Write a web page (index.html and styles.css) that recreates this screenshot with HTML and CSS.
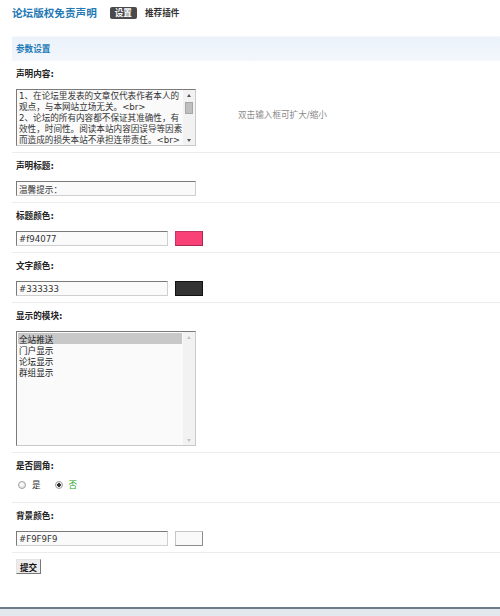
FILE: index.html
```html
<!DOCTYPE html>
<html lang="zh-CN">
<head>
    <meta charset="UTF-8">
    <title>论坛版权免责声明 - 设置</title>
    <link rel="stylesheet" href="styles.css">
</head>
<body>
    <div class="top">
        <h1 class="plugin-name">论坛版权免责声明</h1>
        <span class="tab tab-on">设置</span>
        <span class="tab">推荐插件</span>
    </div>

    <form class="panel">
        <div class="panel-head">参数设置</div>

        <!-- 声明内容 -->
        <div class="row">
            <div class="row-label">声明内容:</div>
            <div class="field">
                <div class="box box-area">
                    <textarea class="area">1、在论坛里发表的文章仅代表作者本人的观点，与本网站立场无关。&lt;br&gt;
2、论坛的所有内容都不保证其准确性，有效性，时间性。阅读本站内容因误导等因素而造成的损失本站不承担连带责任。&lt;br&gt;
3、论坛的所有内容均由网友发表，如有侵犯您的版权请联系管理员，我们将在第一时间内删除。&lt;br&gt;
4、论坛的所有言论不代表本站观点，请读者自行判断其真实性。&lt;br&gt;
5、转载请注明出处，违者必究。&lt;br&gt;
6、本声明未涉及的问题参见国家有关法律法规，当本声明与国家法律法规冲突时，以国家法律法规为准。</textarea>
                    <div class="vscroll">
                        <span class="vs-btn vs-up"></span>
                        <span class="vs-track"><span class="vs-thumb"></span></span>
                        <span class="vs-btn vs-down"></span>
                    </div>
                </div>
                <span class="hint">双击输入框可扩大/缩小</span>
            </div>
        </div>

        <!-- 声明标题 -->
        <div class="row">
            <div class="row-label">声明标题:</div>
            <div class="field">
                <input class="txt" type="text" value="温馨提示：">
            </div>
        </div>

        <!-- 标题颜色 -->
        <div class="row">
            <div class="row-label">标题颜色:</div>
            <div class="field">
                <input class="txt txt-color" type="text" value="#f94077">
                <span class="swatch swatch-pink"></span>
            </div>
        </div>

        <!-- 文字颜色 -->
        <div class="row">
            <div class="row-label">文字颜色:</div>
            <div class="field">
                <input class="txt txt-color" type="text" value="#333333">
                <span class="swatch swatch-dark"></span>
            </div>
        </div>

        <!-- 显示的模块 -->
        <div class="row">
            <div class="row-label">显示的模块:</div>
            <div class="field">
                <div class="box box-list">
                    <select class="modules" multiple size="10">
                        <option selected>全站推送</option>
                        <option>门户显示</option>
                        <option>论坛显示</option>
                        <option>群组显示</option>
                    </select>
                    <div class="vscroll vscroll-off">
                        <span class="vs-btn vs-up"></span>
                        <span class="vs-track"></span>
                        <span class="vs-btn vs-down"></span>
                    </div>
                </div>
            </div>
        </div>

        <!-- 是否圆角 -->
        <div class="row">
            <div class="row-label">是否圆角:</div>
            <div class="field radios">
                <label class="radio"><input type="radio" name="rounded" value="1"><span>是</span></label>
                <label class="radio radio-on"><input type="radio" name="rounded" value="0" checked><span>否</span></label>
            </div>
        </div>

        <!-- 背景颜色 -->
        <div class="row">
            <div class="row-label">背景颜色:</div>
            <div class="field">
                <input class="txt txt-color" type="text" value="#F9F9F9">
                <span class="swatch swatch-light"></span>
            </div>
        </div>

        <div class="row row-last">
            <button class="btn" type="button">提交</button>
        </div>
    </form>

    <div class="footer"></div>
</body>
</html>
```

FILE: styles.css
```css
* {
    margin: 0;
    padding: 0;
    box-sizing: border-box;
}

html, body {
    height: 100%;
}

body {
    font-family: "DejaVu Sans", "Noto Sans CJK SC", sans-serif;
    font-size: 8.6px;
    color: #222;
    background: #fff;
    display: flex;
    flex-direction: column;
}

/* header: plugin name + tabs */
.top {
    display: flex;
    align-items: center;
    height: 25px;
    padding-left: 12px;
    margin-bottom: 11px;
}

.plugin-name {
    font-size: 10.6px;
    font-weight: bold;
    color: #2479b4;
    margin-right: 13px;
}

.tab {
    font-weight: bold;
    color: #333;
    line-height: 12px;
}

.tab-on {
    background: #4a4a4a;
    color: #fff;
    padding: 0 5px;
    border-radius: 2px;
    margin-right: 8px;
}

/* settings panel */
.panel {
    margin-left: 12px;
}

.panel-head {
    height: 25px;
    line-height: 25px;
    padding-left: 4px;
    font-weight: bold;
    color: #1d7ab6;
    background: linear-gradient(#ebf2fa, #f3f7fc);
    border-top: 1px solid #f5f8fc;
}

.row {
    padding: 6px 0 6px 4px;
    border-bottom: 1px solid #ececec;
}

.row-label {
    line-height: 14px;
    font-weight: bold;
    color: #222;
    margin-bottom: 8px;
}

.field {
    display: flex;
    align-items: center;
}

/* framed boxes: textarea / listbox with a classic scrollbar */
.box {
    display: flex;
    width: 180px;
    background: #fafafa;
    border: 1px solid;
    border-color: #7a7a7a #c9c9c9 #c9c9c9 #7a7a7a;
}

.box-area {
    height: 57px;
}

.box-list {
    height: 115px;
}

.area {
    flex: 1;
    min-width: 0;
    padding: 1px 0 0 2px;
    font: inherit;
    line-height: 11px;
    color: #333;
    resize: none;
    overflow: hidden;
    background: transparent;
    border: 0;
    outline: none;
}

.modules {
    flex: 1;
    min-width: 0;
    padding: 1px;
    font: inherit;
    color: #222;
    background: transparent;
    border: 0;
    overflow: hidden;
    outline: none;
}

.modules option {
    line-height: 11px;
    height: 11px;
    padding: 0 1px;
}

.modules option:checked {
    background: #c8c8c8 linear-gradient(#c8c8c8, #c8c8c8);
    color: #222;
}

.vscroll {
    width: 12px;
    display: flex;
    flex-direction: column;
    background: #f2f2f2;
}

.vs-btn {
    height: 10px;
    display: flex;
    align-items: center;
    justify-content: center;
}

.vs-up::before,
.vs-down::before {
    content: "";
    border-left: 2.5px solid transparent;
    border-right: 2.5px solid transparent;
}

.vs-up::before {
    border-bottom: 3px solid #555;
}

.vs-down::before {
    border-top: 3px solid #555;
}

.vs-track {
    flex: 1;
    display: flex;
    justify-content: center;
}

.vs-thumb {
    width: 8px;
    height: 12px;
    margin-top: 2px;
    background: #bfbfbf;
    border: 1px solid #a6a6a6;
}

.vscroll-off .vs-up::before {
    border-bottom-color: #c4c4c4;
}

.vscroll-off .vs-down::before {
    border-top-color: #c4c4c4;
}

.hint {
    margin-left: 42px;
    margin-bottom: 8px;
    color: #8a8a8a;
}

/* text inputs */
.txt {
    width: 180px;
    height: 15px;
    padding: 0 2px;
    font: inherit;
    color: #333;
    background: #fafafa;
    border: 1px solid;
    border-color: #7a7a7a #cfcfcf #cfcfcf #7a7a7a;
    outline: none;
}

.txt-color {
    width: 152px;
}

.swatch {
    width: 28px;
    height: 15px;
    margin-left: 7px;
    border: 1px solid;
}

.swatch-pink {
    background: #f94077;
    border-color: #c23863 #a8294f #a8294f #c23863;
}

.swatch-dark {
    background: #333333;
    border-color: #111;
}

.swatch-light {
    background: #f9f9f9;
    border-color: #c6c6c6 #8c8c8c #8c8c8c #c6c6c6;
}

/* radio buttons */
.radios {
    height: 15px;
    align-items: flex-start;
}

.radio {
    display: flex;
    align-items: center;
    margin-right: 12px;
    color: #333;
}

.radio input {
    appearance: none;
    width: 8px;
    height: 8px;
    margin: 0 6px 0 2px;
    border: 1px solid #a0a0a0;
    border-radius: 50%;
    background: radial-gradient(circle at 40% 35%, #fff, #dcdcdc);
}

.radio input:checked {
    background: radial-gradient(circle, #333 0 1.6px, #f4f4f4 2px, #dcdcdc);
}

.radio span {
    line-height: 8px;
}

.radio-on span {
    color: #22a322;
}

/* submit */
.row-last {
    border-bottom: 0;
}

.btn {
    height: 15px;
    padding: 0 3px;
    font: inherit;
    font-weight: bold;
    color: #111;
    background: #ececec;
    border: 1px solid;
    border-color: #e4e4e4 #777 #777 #e4e4e4;
}

.footer {
    margin-top: auto;
    height: 9px;
    border-top: 2px solid #6d7c8a;
    background: #e3e8ef;
}
```
